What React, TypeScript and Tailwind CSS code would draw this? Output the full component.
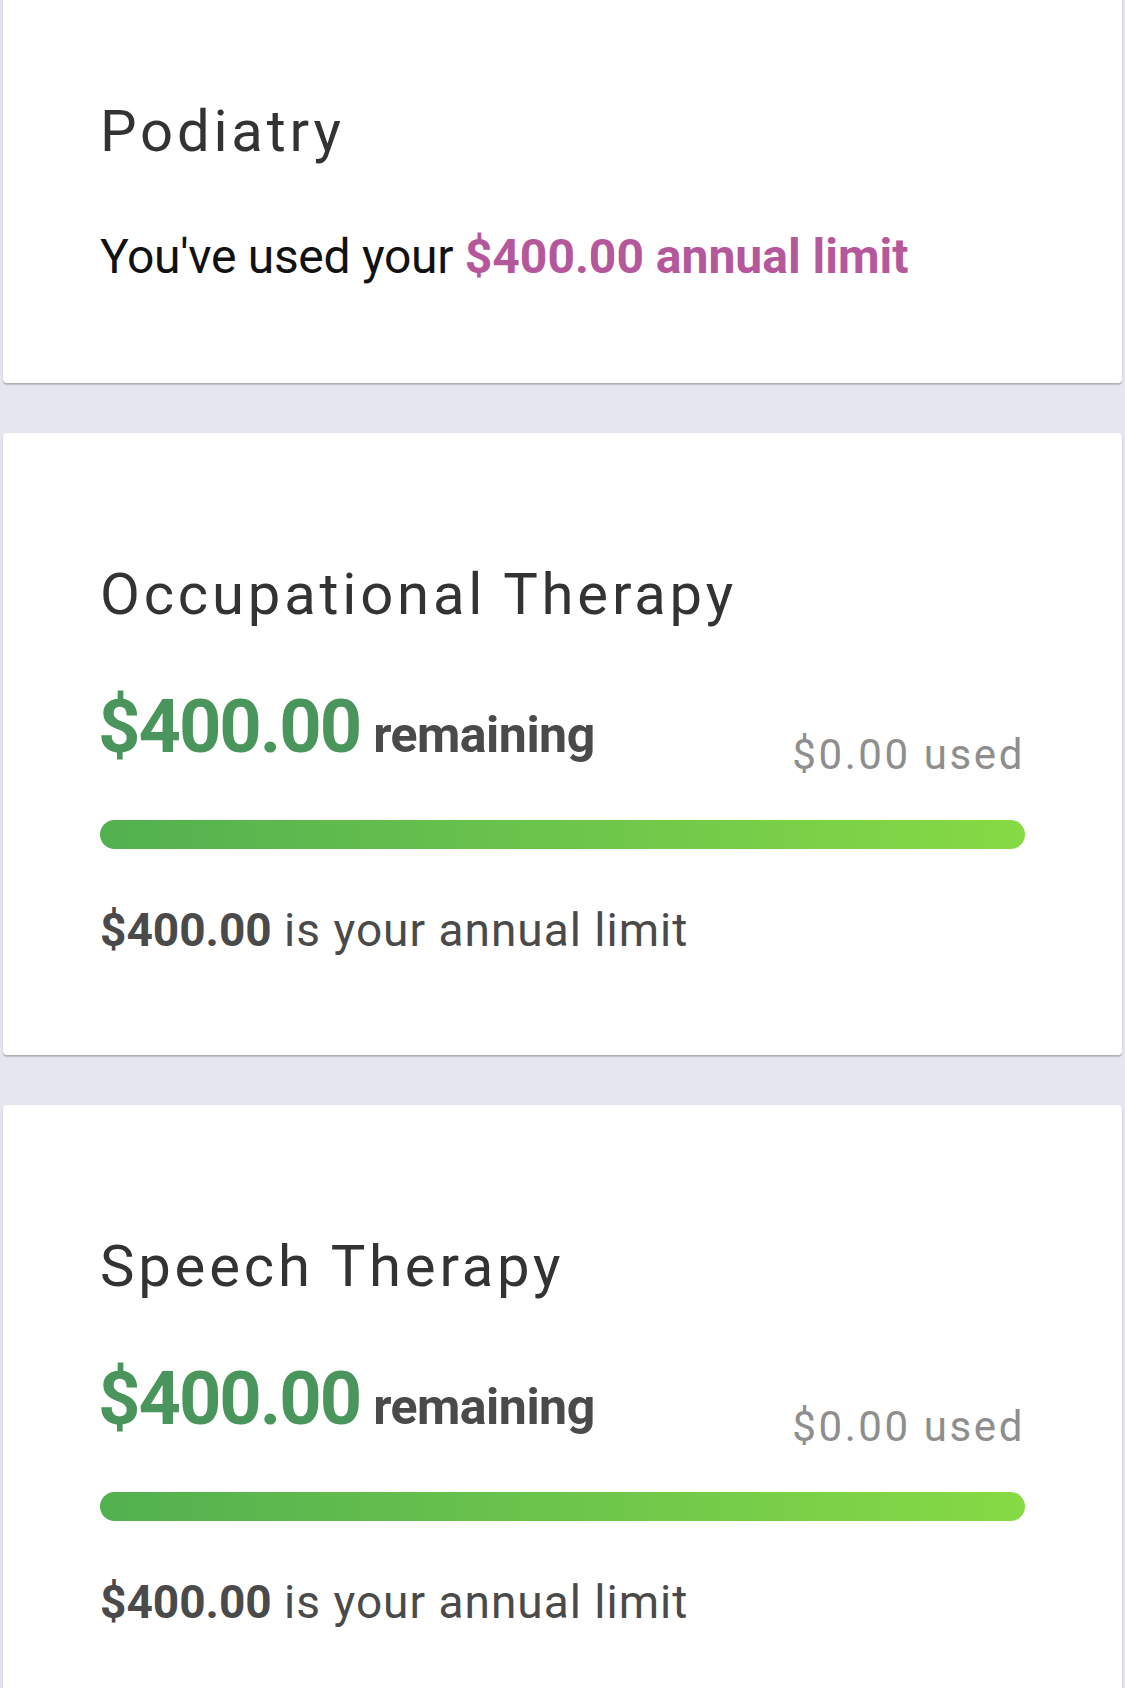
// Benefit limits list (scrolled view)

const FONT = "font-['Roboto','Liberation_Sans',sans-serif]";

const BENEFITS = [
  { id: "occupational", name: "Occupational Therapy", remaining: 400, used: 0, limit: 400 },
  { id: "speech", name: "Speech Therapy", remaining: 400, used: 0, limit: 400 },
];

const money = (n: number) => `$${n.toFixed(2)}`;

function Card({ children, className = "" }: { children: React.ReactNode; className?: string }) {
  return (
    <div
      className={`mx-[3px] rounded-[4px] bg-white px-[97px] pt-[132px] pb-[102px] shadow-[0_1px_2px_rgba(0,0,0,0.18),0_2px_1px_rgba(0,0,0,0.12)] ${className}`}
    >
      {children}
    </div>
  );
}

export default function App() {
  return (
    <div className={`min-h-[1688px] w-full overflow-hidden bg-[#e4e7ef] ${FONT}`}>
      <div className="flex flex-col gap-[50px]">
        {/* Used up benefit */}
        <Card className="-mt-[30px]">
          <h2 className="text-[58px] leading-none font-normal tracking-[3.8px] text-[#333333]">Podiatry</h2>
          <p className="mt-[73px] text-[48px] leading-none text-[#111111]">
            <span className="tracking-[-0.3px]">You've used your </span>
            <span className="font-bold text-[#b5589b]">$400.00 annual limit</span>
          </p>
        </Card>

        {BENEFITS.map((b) => (
          <Card key={b.id}>
            <h2 className="text-[58px] leading-none font-normal tracking-[3.8px] text-[#333333]">{b.name}</h2>

            {/* Amounts */}
            <div className="mt-[67px] flex items-end justify-between">
              <div className="mb-[12px] -ml-[2px] flex items-baseline">
                <span className="text-[74px] leading-none font-bold tracking-[-2px] text-[#4a955c]">
                  {money(b.remaining)}
                </span>
                <span className="ml-[13px] text-[50px] leading-none font-bold tracking-[-0.5px] text-[#4a4a4a]">
                  remaining
                </span>
              </div>
              <span className="text-[42px] leading-none tracking-[2.6px] text-[#8e8e8e]">
                {money(b.used)} used
              </span>
            </div>

            {/* Progress bar */}
            <div className="mt-[44px] h-[29px] w-full rounded-full bg-linear-to-r from-[#52b04f] to-[#86da44]" />

            <p className="mt-[58px] text-[46px] leading-none tracking-[1px] text-[#4a4a4a]">
              <span className="font-bold tracking-normal">{money(b.limit)}</span> is your annual limit
            </p>
          </Card>
        ))}
      </div>
    </div>
  );
}
